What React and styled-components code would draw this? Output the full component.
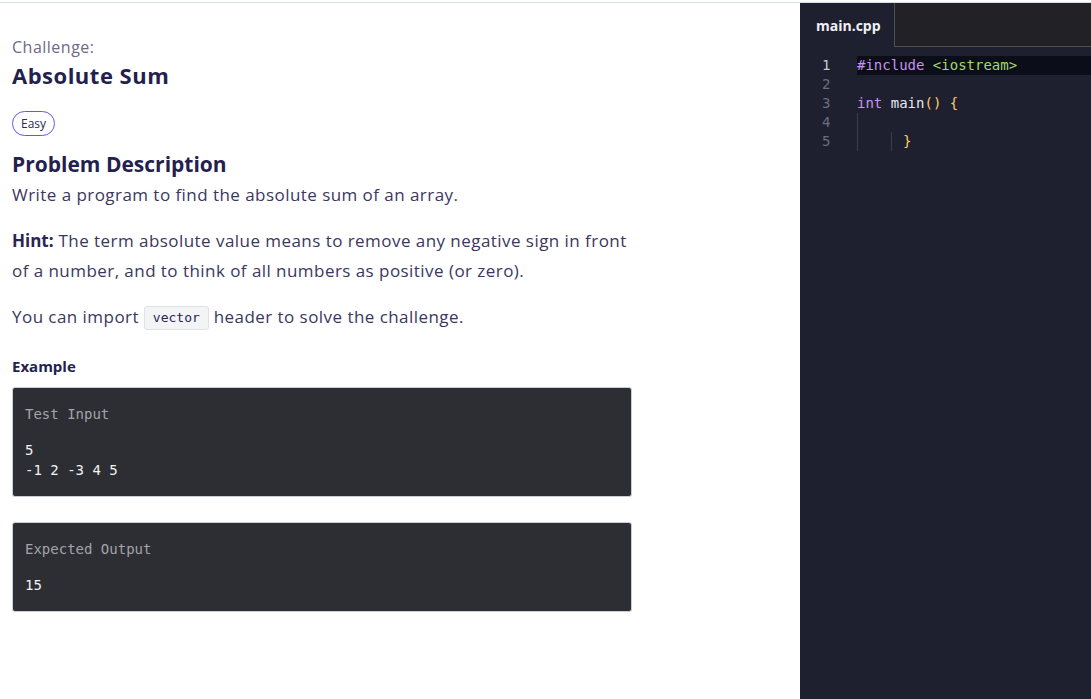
import React from 'react'
import styled, { createGlobalStyle } from 'styled-components'

const GlobalStyle = createGlobalStyle`
  html, body { margin: 0; padding: 0; height: 100%; background: #fff; }
  #root { height: 100%; }
  * { box-sizing: border-box; }
`

const code = [
  [{ t: '#include ', c: '#c792ea' }, { t: '<iostream>', c: '#a5d86e' }],
  [],
  [{ t: 'int', c: '#c792ea' }, { t: ' main', c: '#e8e8f0' }, { t: '()', c: '#ffcb6b' }, { t: ' {', c: '#ffcb6b' }],
  [],
  [{ t: '}', c: '#ffcb6b' }],
]

export default function App() {
  return (
    <>
      <GlobalStyle />
      <Page>
        <Left>
          <Kicker>Challenge:</Kicker>
          <Title>Absolute Sum</Title>
          <Badge>Easy</Badge>
          <SubTitle>Problem Description</SubTitle>
          <Para>Write a program to find the absolute sum of an array.</Para>
          <Para>
            <b>Hint:</b> The term absolute value means to remove any negative sign in front
            of a number, and to think of all numbers as positive (or zero).
          </Para>
          <Para>
            You can import <Code>vector</Code> header to solve the challenge.
          </Para>
          <Label>Example</Label>
          <Box>
            <BoxHead>Test Input</BoxHead>
            <BoxBody>{'5\n-1 2 -3 4 5'}</BoxBody>
          </Box>
          <Box>
            <BoxHead>Expected Output</BoxHead>
            <BoxBody>15</BoxBody>
          </Box>
        </Left>
        <Editor>
          <TabBar>
            <Tab>main.cpp</Tab>
            <TabRest />
          </TabBar>
          <Lines>
            {code.map((line, i) => (
              <Line key={i}>
                <Num active={i === 0}>{i + 1}</Num>
                <Src active={i === 0}>
                  {i === 3 && <Guide />}
                  {i === 4 && (
                    <>
                      <Guide />
                      <Indent />
                      <Guide />
                      <Space />
                    </>
                  )}
                  {line.map((s, j) => (
                    <span key={j} style={{ color: s.c }}>{s.t}</span>
                  ))}
                </Src>
              </Line>
            ))}
          </Lines>
        </Editor>
      </Page>
    </>
  )
}

const Page = styled.div`
  display: flex;
  height: 100vh;
  border-top: 1px solid #d6dde4;
  margin-top: 2px;
  font-family: "Open Sans", "Noto Sans", sans-serif;
`

const Left = styled.div`
  width: 800px;
  padding: 33px 12px 0;
  color: #2a2550;
`

const Kicker = styled.div`
  font-size: 16px;
  letter-spacing: 0.5px;
  color: #6d6a86;
  line-height: 22px;
`

const Title = styled.h1`
  margin: 2px 0 0;
  font-size: 22px;
  letter-spacing: 0.5px;
  font-weight: 700;
  color: #241f4e;
  line-height: 30px;
`

const Badge = styled.span`
  display: inline-block;
  margin-top: 21px;
  padding: 0 8px;
  height: 25px;
  line-height: 23px;
  border: 1px solid #5b5bef;
  border-radius: 13px;
  font-size: 12px;
  color: #2f2a52;
`

const SubTitle = styled.h2`
  margin: 14px 0 0;
  font-size: 21px;
  font-weight: 700;
  color: #241f4e;
  line-height: 28px;
`

const Para = styled.p`
  margin: 2px 0 16px;
  width: 630px;
  font-size: 17px;
  letter-spacing: 0.45px;
  line-height: 30px;
  color: #3b3760;
  b { font-weight: 700; color: #2a2550; letter-spacing: 0; }
  & + & { margin-top: 0; }
`

const Code = styled.code`
  display: inline-block;
  padding: 0 8px;
  height: 24px;
  line-height: 22px;
  border: 1px solid #dfe1e6;
  border-radius: 3px;
  background: #f3f4f6;
  font-family: "DejaVu Sans Mono", monospace;
  font-size: 13px;
  letter-spacing: 0;
  color: #2a2550;
  vertical-align: middle;
`

const Label = styled.div`
  margin-top: 23px;
  font-size: 15px;
  font-weight: 700;
  color: #241f4e;
  line-height: 22px;
`

const Box = styled.div`
  margin-top: 10px;
  margin-bottom: 25px;
  width: 620px;
  padding: 16px 12px;
  background: #2d2e33;
  border: 1px solid #c9ced6;
  border-radius: 3px;
  font-family: "DejaVu Sans Mono", monospace;
  font-size: 14px;
  line-height: 20px;
  & + & { margin-top: 0; }
`

const BoxHead = styled.div`
  color: #a3a3a8;
  margin-bottom: 16px;
`

const BoxBody = styled.div`
  color: #f2f2f2;
  white-space: pre;
`

const Editor = styled.div`
  flex: 1;
  background: #1e2030;
  display: flex;
  flex-direction: column;
`

const TabBar = styled.div`
  display: flex;
  height: 44px;
`

const Tab = styled.div`
  width: 94px;
  padding-left: 16px;
  display: flex;
  align-items: center;
  font-size: 14px;
  font-weight: 700;
  color: #f0f0f5;
  background: #1e2030;
`

const TabRest = styled.div`
  flex: 1;
  background: #222226;
  border-left: 1px solid #4d4d52;
  border-bottom: 1px solid #4d4d52;
`

const Lines = styled.div`
  padding-top: 9px;
  font-family: "DejaVu Sans Mono", monospace;
  font-size: 14px;
`

const Line = styled.div`
  display: flex;
  height: 19px;
  line-height: 19px;
`

const Num = styled.div`
  width: 57px;
  padding-left: 22px;
  color: ${p => (p.active ? '#c8c8d2' : '#6c6e80')};
`

const Src = styled.div`
  flex: 1;
  display: flex;
  white-space: pre;
  background: ${p => (p.active ? '#0b0e18' : 'transparent')};
`

const Guide = styled.span`
  width: 1px;
  height: 19px;
  background: #3a3d4e;
`

const Indent = styled.span`
  width: 33px;
`

const Space = styled.span`
  width: 11px;
`
